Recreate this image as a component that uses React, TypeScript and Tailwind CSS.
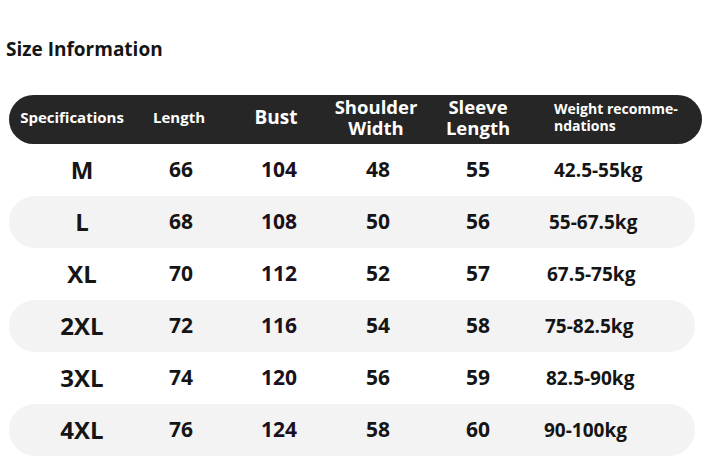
const rows = [
  { size: 'M', length: '66', bust: '104', shoulder: '48', sleeve: '55', weight: '42.5-55kg', wPad: 'pl-[23px]' },
  { size: 'L', length: '68', bust: '108', shoulder: '50', sleeve: '56', weight: '55-67.5kg', wPad: 'pl-[18px]' },
  { size: 'XL', length: '70', bust: '112', shoulder: '52', sleeve: '57', weight: '67.5-75kg', wPad: 'pl-[16px]' },
  { size: '2XL', length: '72', bust: '116', shoulder: '54', sleeve: '58', weight: '75-82.5kg', wPad: 'pl-[14px]' },
  { size: '3XL', length: '74', bust: '120', shoulder: '56', sleeve: '59', weight: '82.5-90kg', wPad: 'pl-[15px]' },
  { size: '4XL', length: '76', bust: '124', shoulder: '58', sleeve: '60', weight: '90-100kg', wPad: 'pl-[13px]' },
];

const cols = 'grid grid-cols-[124px_92px_104px_94px_108px_1fr] items-center';

export default function App() {
  return (
    <div
      className="w-[704px] h-[471px] bg-white text-[#151515] overflow-hidden"
      style={{ fontFamily: '"Open Sans", "Noto Sans", sans-serif' }}
    >
      <h1 className="pt-[36px] pl-[6px] text-[19px] font-bold leading-[26px]">Size Information</h1>

      <div className="mt-[33px] ml-[9px] mr-[2px]">
        <div className={`${cols} h-[49px] pb-[5px] rounded-full bg-[#262626] text-white font-bold`}>
          <div className="text-center text-[15px] pl-[2px]">Specifications</div>
          <div className="text-center text-[15px]">Length</div>
          <div className="text-center text-[19px] pr-[2px]">Bust</div>
          <div className="text-center text-[18.5px] leading-[21px]">
            <div>Shoulder</div>
            <div>Width</div>
          </div>
          <div className="text-center text-[18.5px] leading-[21px] pl-[2px]">
            <div>Sleeve</div>
            <div>Length</div>
          </div>
          <div className="pl-[23px] text-[14px] leading-[17px]">
            <div>Weight recomme-</div>
            <div>ndations</div>
          </div>
        </div>

        <div className="mr-[7px]">
          {rows.map((r, i) => (
            <div
              key={r.size}
              className={`${cols} h-[52px] font-bold rounded-full ${i % 2 === 1 ? 'bg-[#f3f3f3]' : ''}`}
            >
              <div className="text-center text-[24px] pl-[22px]">{r.size}</div>
              <div className="text-center text-[21px] pl-[4px]">{r.length}</div>
              <div className="text-center text-[21px] pl-[4px] text-[#1b1020]">{r.bust}</div>
              <div className="text-center text-[21px] pl-[4px]">{r.shoulder}</div>
              <div className="text-center text-[21px] pl-[2px]">{r.sleeve}</div>
              <div className={`${r.wPad} text-[19px]`}>{r.weight}</div>
            </div>
          ))}
        </div>
      </div>
    </div>
  );
}
